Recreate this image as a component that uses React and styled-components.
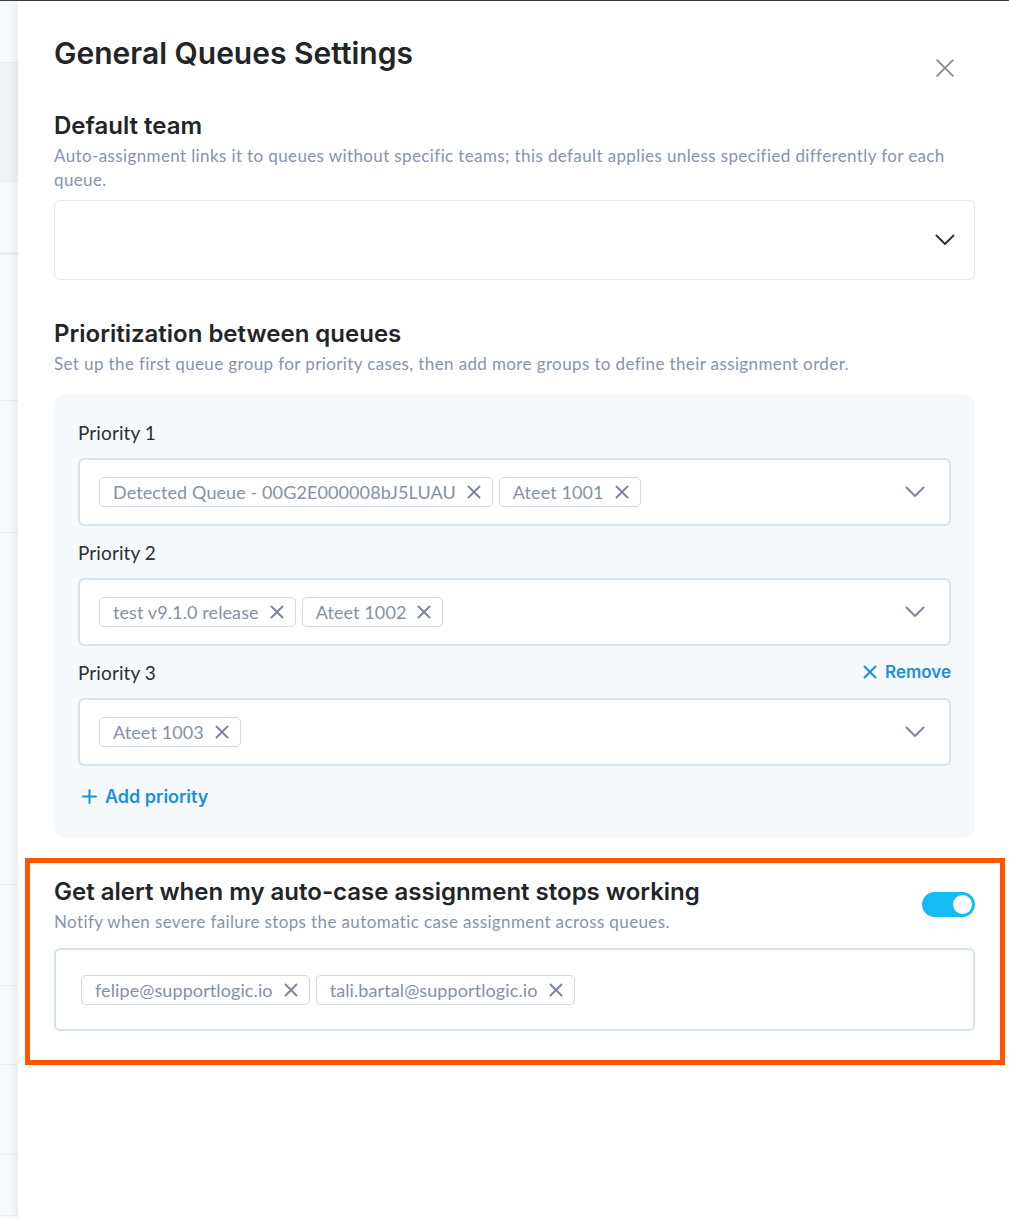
import React from 'react';
import styled, {createGlobalStyle} from "styled-components";

const GlobalStyle = createGlobalStyle`
  html, body {
    margin: 0;
    padding: 0;
    background: #ffffff;
  }
  body {
    font-family: Lato, "Noto Sans", sans-serif;
    border-top: 1px solid #3a3a3a;
  }
`

const Page = styled.div`
  display: flex;
  min-height: 1217px;
`

const Backdrop = styled.div`
  width: 18px;
  flex-shrink: 0;
  background: #f8f9fb;
  display: flex;
  flex-direction: column;
`

const BackdropRow = styled.div`
  height: ${({h}) => h}px;
  flex-shrink: 0;
  background: ${({dark}) => dark ? '#eff3f6' : 'transparent'};
  border-bottom: ${({thick}) => thick ? 3 : 1}px solid #ebedf0;
`

const Panel = styled.div`
  flex: 1;
  background: #ffffff;
  box-shadow: -4px 0 8px rgba(20, 30, 50, 0.06);
  padding: 34px 34px 40px 36px;
  display: flex;
  flex-direction: column;
`

const Header = styled.div`
  display: flex;
  justify-content: space-between;
  align-items: flex-start;
`

const Title = styled.h1`
  margin: 0;
  font-family: Inter, sans-serif;
  font-size: 30px;
  font-weight: 600;
  color: #222428;
  line-height: 36px;
`

const CloseButton = styled.button`
  border: none;
  background: transparent;
  padding: 0;
  margin: 23px 20px 0 0;
  width: 20px;
  height: 20px;
  cursor: pointer;
  display: flex;
  align-items: center;
  justify-content: center;
`

const Section = styled.section`
  margin-top: ${({top}) => top}px;
  display: flex;
  flex-direction: column;
`

const SectionTitle = styled.h2`
  margin: 0;
  font-family: Inter, sans-serif;
  font-size: 24px;
  font-weight: 600;
  color: #222428;
  line-height: 30px;
`

const Description = styled.p`
  margin: 3px 0 0;
  font-size: 17px;
  letter-spacing: 0.38px;
  line-height: 24px;
  color: #8794a8;
`

const SelectBox = styled.div`
  margin-top: ${({top}) => top || 0}px;
  height: ${({h}) => h}px;
  box-sizing: border-box;
  background: #ffffff;
  border: ${({strong}) => strong ? '2px solid #d7e3ec' : '1px solid #e4e7eb'};
  border-radius: 6px;
  display: flex;
  align-items: center;
  padding: 0 ${({pr}) => pr || 24}px 0 ${({pl}) => pl || 19}px;
`

const ChipList = styled.div`
  flex: 1;
  display: flex;
  gap: 6px;
  flex-wrap: wrap;
`

const Chip = styled.span`
  display: inline-flex;
  align-items: center;
  gap: 11px;
  height: 30px;
  box-sizing: border-box;
  padding: 0 11px 0 13px;
  border: 1px solid #d3d8de;
  border-radius: 5px;
  font-size: 18px;
  letter-spacing: 0.1px;
  color: #8591a3;
  background: #ffffff;
`

const PriorityPanel = styled.div`
  margin-top: 18px;
  background: #f5f9fc;
  border-radius: 12px;
  padding: 20px 24px 31px 24px;
  display: flex;
  flex-direction: column;
`

const PriorityHead = styled.div`
  display: flex;
  justify-content: space-between;
  align-items: center;
  margin-top: ${({first}) => first ? 0 : 8}px;
  height: 36px;
`

const PriorityLabel = styled.span`
  font-size: 19px;
  letter-spacing: 0.1px;
  color: #2c2e33;
`

const LinkButton = styled.button`
  border: none;
  background: transparent;
  padding: 0;
  display: inline-flex;
  align-items: center;
  gap: 8px;
  font-family: Inter, sans-serif;
  font-size: ${({size}) => size}px;
  font-weight: 600;
  color: #1a90d9;
  cursor: pointer;
`

const AddRow = styled.div`
  margin-top: 20px;
  padding-left: 4px;
`

const AlertSection = styled.section`
  margin: 20px -30px 0 -29px;
  border: 5px solid #ff5500;
  padding: 14px 25px 29px 24px;
  display: flex;
  flex-direction: column;
`

const AlertHead = styled.div`
  display: flex;
  justify-content: space-between;
  align-items: flex-start;
`

const Toggle = styled.div`
  width: 53px;
  height: 25px;
  border-radius: 13px;
  background: #13bcf5;
  margin-top: 15px;
  flex-shrink: 0;
  display: flex;
  align-items: center;
  justify-content: ${({on}) => on ? 'flex-end' : 'flex-start'};
  padding: 0 3px;
  box-sizing: border-box;
`

const Knob = styled.span`
  width: 19px;
  height: 19px;
  border-radius: 50%;
  background: #ffffff;
`

const XIcon = ({size = 14, color = '#7d889a', stroke = 2}) => (
    <svg width={size} height={size} viewBox="0 0 14 14">
        <path d="M1.5 1.5 L12.5 12.5 M12.5 1.5 L1.5 12.5" stroke={color} strokeWidth={stroke} strokeLinecap="round" fill="none"/>
    </svg>
)

const Chevron = ({color = '#7d889a'}) => (
    <svg width="20" height="12" viewBox="0 0 20 12">
        <path d="M1.5 1.5 L10 10 L18.5 1.5" stroke={color} strokeWidth="2" strokeLinecap="round" strokeLinejoin="round" fill="none"/>
    </svg>
)

const Plus = () => (
    <svg width="15" height="15" viewBox="0 0 15 15">
        <path d="M7.5 1 V14 M1 7.5 H14" stroke="#1a90d9" strokeWidth="2" strokeLinecap="round"/>
    </svg>
)

const PRIORITIES = [
    {label: 'Priority 1', chips: ['Detected Queue - 00G2E000008bJ5LUAU', 'Ateet 1001']},
    {label: 'Priority 2', chips: ['test v9.1.0 release', 'Ateet 1002']},
    {label: 'Priority 3', chips: ['Ateet 1003'], removable: true},
]

const EMAILS = ['felipe@supportlogic.io', 'tali.bartal@supportlogic.io']

const BACKDROP = [
    {h: 61}, {h: 118, dark: true}, {h: 70, thick: true}, {h: 145}, {h: 131},
    {h: 351}, {h: 100}, {h: 78}, {h: 89}, {h: 60},
]

const App = () => {
    return (
        <Page>
            <GlobalStyle/>
            <Backdrop>
                {BACKDROP.map((r, i) => <BackdropRow key={i} {...r}/>)}
            </Backdrop>
            <Panel>
                <Header>
                    <Title>General Queues Settings</Title>
                    <CloseButton aria-label="close">
                        <XIcon size={20} color="#8a8a8a" stroke={1.3}/>
                    </CloseButton>
                </Header>

                <Section top={33}>
                    <SectionTitle>Default team</SectionTitle>
                    <Description>
                        Auto-assignment links it to queues without specific teams; this default applies unless specified differently for each queue.
                    </Description>
                    <SelectBox h={80} top={8} pr={19}>
                        <ChipList/>
                        <Chevron color="#333333"/>
                    </SelectBox>
                </Section>

                <Section top={39}>
                    <SectionTitle>Prioritization between queues</SectionTitle>
                    <Description>
                        Set up the first queue group for priority cases, then add more groups to define their assignment order.
                    </Description>
                    <PriorityPanel>
                        {PRIORITIES.map((p, i) => (
                            <React.Fragment key={p.label}>
                                <PriorityHead first={i === 0}>
                                    <PriorityLabel>{p.label}</PriorityLabel>
                                    {p.removable && (
                                        <LinkButton size={17}>
                                            <XIcon size={14} color="#1a90d9" stroke={2}/>
                                            Remove
                                        </LinkButton>
                                    )}
                                </PriorityHead>
                                <SelectBox h={68} top={8} strong>
                                    <ChipList>
                                        {p.chips.map((c) => (
                                            <Chip key={c}>{c}<XIcon/></Chip>
                                        ))}
                                    </ChipList>
                                    <Chevron/>
                                </SelectBox>
                            </React.Fragment>
                        ))}
                        <AddRow>
                            <LinkButton size={18}>
                                <Plus/>
                                Add priority
                            </LinkButton>
                        </AddRow>
                    </PriorityPanel>
                </Section>

                <AlertSection>
                    <AlertHead>
                        <div>
                            <SectionTitle>Get alert when my auto-case assignment stops working</SectionTitle>
                            <Description>
                                Notify when severe failure stops the automatic case assignment across queues.
                            </Description>
                        </div>
                        <Toggle on>
                            <Knob/>
                        </Toggle>
                    </AlertHead>
                    <SelectBox h={83} top={14} strong pl={25}>
                        <ChipList>
                            {EMAILS.map((e) => (
                                <Chip key={e}>{e}<XIcon/></Chip>
                            ))}
                        </ChipList>
                    </SelectBox>
                </AlertSection>
            </Panel>
        </Page>
    );
};

export default App;
